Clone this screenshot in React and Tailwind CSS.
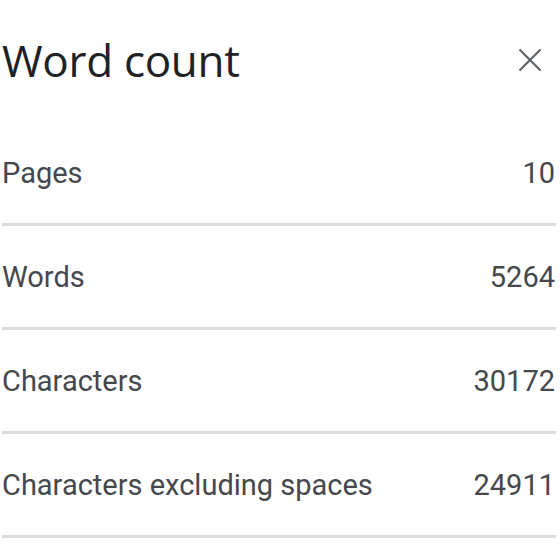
const rows = [
  { label: "Pages", value: "10" },
  { label: "Words", value: "5264" },
  { label: "Characters", value: "30172" },
  { label: "Characters excluding spaces", value: "24911" },
];

export default function App() {
  return (
    <div className="w-[560px] h-[560px] bg-white overflow-hidden pl-[2px] pr-[4px]">
      <div className="h-[122px] flex items-center justify-between pb-[2px]">
        <h1 className="text-[44px] leading-none text-[#202124] font-['Open_Sans',sans-serif] tracking-[-0.3px]">
          Word count
        </h1>
        <button className="w-[40px] h-[40px] mr-[6px] flex items-center justify-center text-[#5f6368]">
          <svg width="24" height="24" viewBox="0 0 24 24" fill="none" stroke="currentColor" strokeWidth="2.2">
            <path d="M1.5 1.5l21 21M22.5 1.5L1.5 22.5" />
          </svg>
        </button>
      </div>
      {rows.map((r) => (
        <div
          key={r.label}
          className="h-[104px] flex items-center justify-between border-b-[3px] border-[#dadce0] font-['Roboto',sans-serif] text-[29px] text-[#45484c] pt-[3px]"
        >
          <span>{r.label}</span>
          <span className="pr-[1px]">{r.value}</span>
        </div>
      ))}
    </div>
  );
}
